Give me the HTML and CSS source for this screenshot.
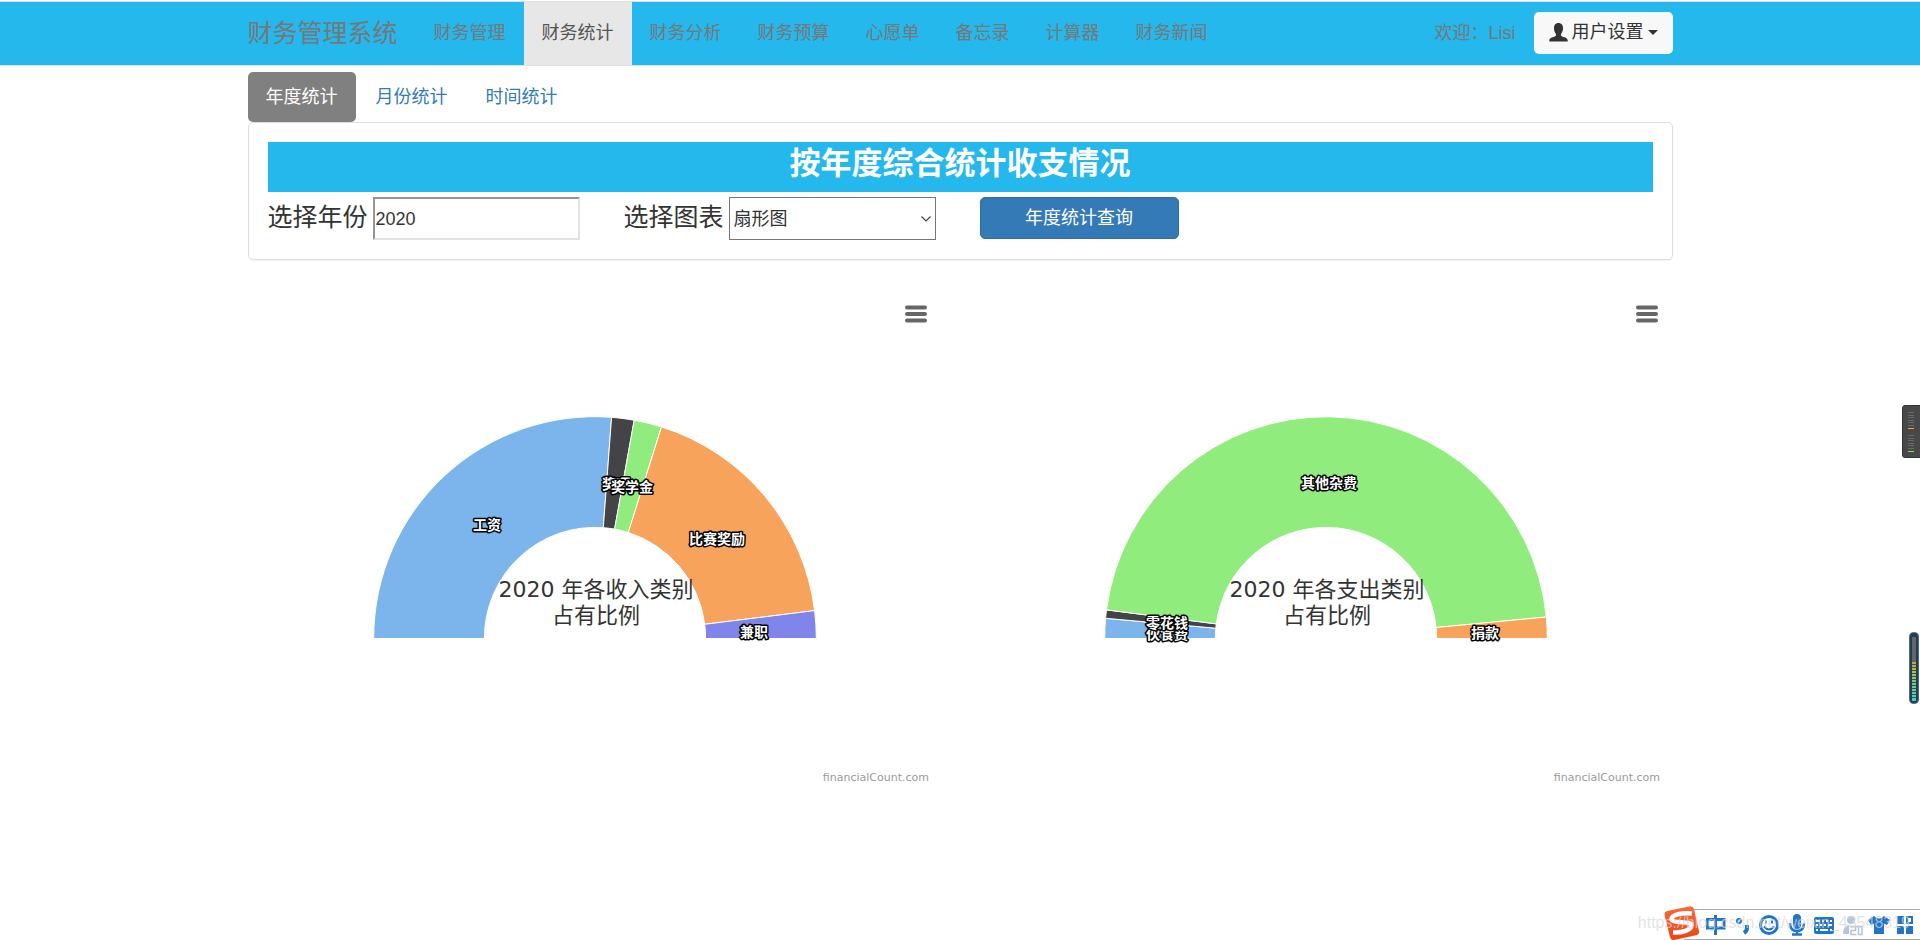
FILE: index.html
```html
<!DOCTYPE html>
<html lang="zh-CN">
<head>
<meta charset="utf-8">
<meta name="viewport" content="width=device-width, initial-scale=1">
<title>财务管理系统</title>
<link rel="stylesheet" href="styles.css">
</head>
<body>
<header class="navbar">
  <div class="container navbar-inner">
    <a class="brand" href="#">财务管理系统</a>
    <nav class="nav">
      <a href="#">财务管理</a>
      <a href="#" class="active">财务统计</a>
      <a href="#">财务分析</a>
      <a href="#">财务预算</a>
      <a href="#">心愿单</a>
      <a href="#">备忘录</a>
      <a href="#">计算器</a>
      <a href="#">财务新闻</a>
    </nav>
    <span class="welcome">欢迎：Lisi</span>
    <button type="button" class="user-btn">
      <svg width="19" height="19" viewBox="0 0 19 19" aria-hidden="true"><path d="M9.500 0C12.800 0 14 2.300 14 5.500C14 8.300 12.900 9.500 12 11V12.500C12.600 14.200 18.700 14.200 18.700 17.200V18.500H.3V17.200C.3 14.200 6.400 14.200 7 12.500V11C6.100 9.500 5 8.300 5 5.500C5 2.300 6.200 0 9.500 0Z" fill="#333"/></svg>
      用户设置
      <span class="caret"></span>
    </button>
  </div>
</header>

<main class="container">
  <nav class="pills">
    <a href="#" class="active">年度统计</a>
    <a href="#">月份统计</a>
    <a href="#">时间统计</a>
  </nav>

  <section class="panel">
    <h1 class="panel-title">按年度综合统计收支情况</h1>
    <form class="query">
      <div class="field">
        <label for="year">选择年份</label>
        <input id="year" type="text" value="2020">
      </div>
      <div class="field">
        <label for="chart-type">选择图表</label>
        <span class="select-wrap">
          <select id="chart-type"><option>扇形图</option></select>
          <svg class="chevron" width="10" height="6" viewBox="0 0 10 6" aria-hidden="true"><path d="M.5.500 5 5 9.500.500" fill="none" stroke="#444" stroke-width="1.200"/></svg>
        </span>
      </div>
      <button type="button" class="submit">年度统计查询</button>
    </form>
  </section>

  <section class="charts">
    <svg class="chart" viewBox="0 0 694 500" role="img" aria-label="2020 年各收入类别占有比例">
      <g class="slices">
        <path fill="#7cb5ec" d="M125.700 350.500V350A221.300 221.300 0 0 1 363.600 129.300L355.300 239.700A110.600 110.600 0 0 0 236.400 350V350.500Z"/>
        <path fill="#434348" d="M363.600 129.300A221.300 221.300 0 0 1 386.200 132.200L366.600 241.100A110.600 110.600 0 0 0 355.300 239.700Z"/>
        <path fill="#90ed7d" d="M386.200 132.200A221.300 221.300 0 0 1 413.500 138.900L380.300 244.500A110.600 110.600 0 0 0 366.600 241.100Z"/>
        <path fill="#f7a35c" d="M413.500 138.900A221.300 221.300 0 0 1 566.600 322.600L456.700 336.300A110.600 110.600 0 0 0 380.300 244.500Z"/>
        <path fill="#8085e9" d="M566.600 322.600A221.300 221.300 0 0 1 568.300 350V350.500H457.600V350A110.600 110.600 0 0 0 456.700 336.300Z"/>
      </g>
      <text class="chart-title" x="348" y="309">2020 年各收入类别</text>
      <text class="chart-title" x="348" y="335">占有比例</text>
      <g class="labels">
        <text x="239" y="242">工资</text>
        <text x="368" y="201">奖项</text>
        <text x="384" y="204">奖学金</text>
        <text x="469" y="256">比赛奖励</text>
        <text x="506" y="349">兼职</text>
      </g>
      <path class="menu" d="M659 19.500H677M659 26H677M659 32.500H677"/>
      <text class="credits" x="681" y="493">financialCount.com</text>
    </svg>
    <svg class="chart" viewBox="0 0 694 500" role="img" aria-label="2020 年各支出类别占有比例">
      <g class="slices">
        <path fill="#7cb5ec" d="M125.700 350.500V350A221.300 221.300 0 0 1 126.600 330.300L236.800 340.200A110.600 110.600 0 0 0 236.400 350V350.500Z"/>
        <path fill="#434348" d="M126.600 330.300A221.300 221.300 0 0 1 127.500 321.900L237.300 335.900A110.600 110.600 0 0 0 236.800 340.200Z"/>
        <path fill="#90ed7d" d="M127.500 321.900A221.300 221.300 0 0 1 567.300 329L457.100 339.500A110.600 110.600 0 0 0 237.300 335.900Z"/>
        <path fill="#f7a35c" d="M567.300 329A221.300 221.300 0 0 1 568.300 350V350.500H457.600V350A110.600 110.600 0 0 0 457.100 339.500Z"/>
      </g>
      <text class="chart-title" x="348" y="309">2020 年各支出类别</text>
      <text class="chart-title" x="348" y="335">占有比例</text>
      <g class="labels">
        <text x="188" y="351">伙食费</text>
        <text x="188" y="340">零花钱</text>
        <text x="350" y="200">其他杂费</text>
        <text x="506" y="350">捐款</text>
      </g>
      <path class="menu" d="M659 19.500H677M659 26H677M659 32.500H677"/>
      <text class="credits" x="681" y="493">financialCount.com</text>
    </svg>
  </section>
</main>

<svg class="meter meter-top" width="18" height="53" viewBox="0 0 18 53" aria-hidden="true">
  <path d="M18 .5H3Q.5.500.5 3V50Q.5 52.500 3 52.500H18" fill="#484848" stroke="#333"/>
  <path d="M6 7.500H12M6 10.500H12M6 12.500H12M6 15.500H12M6 17.500H12M6 20.500H12M6 30.500H12M6 33.500H12M6 35.500H12M6 38.500H12M6 40.500H12M6 43.500H12" stroke="#6a6a6a"/>
  <path d="M6 23.500H12" stroke="#ffa11a"/><path d="M6 46.500H12" stroke="#8be03c"/>
</svg>
<svg class="meter meter-bottom" width="10" height="72" viewBox="0 0 10 72" aria-hidden="true">
  <defs><linearGradient id="level" x1="0" y1="0" x2="0" y2="1"><stop offset="0" stop-color="#d69d35"/><stop offset=".25" stop-color="#b5bd42"/><stop offset=".6" stop-color="#79c87d"/><stop offset="1" stop-color="#45c9c0"/></linearGradient></defs>
  <rect x=".5" y=".5" width="9" height="71" rx="4" fill="#1f3e58" stroke="#51687c"/>
  <rect x="3" y="5" width="4" height="64" fill="#666"/>
  <rect x="3" y="30" width="4" height="39" fill="url(#level)"/>
  <path d="M3 32.500H7M3 35.500H7M3 38.500H7M3 41.500H7M3 44.500H7M3 47.500H7M3 50.500H7M3 53.500H7M3 56.500H7M3 59.500H7M3 62.500H7M3 65.500H7" stroke="#2b5560"/>
</svg>

<div class="ime" aria-hidden="true">
  <svg width="256" height="34" viewBox="0 0 256 34">
    <defs><linearGradient id="logo" x1="0" y1="0" x2="0" y2="1"><stop offset="0" stop-color="#fb6a3a"/><stop offset="1" stop-color="#ea4416"/></linearGradient></defs>
    <path d="M20 3.500H256V33H20Z" fill="#fff"/><path d="M20 3.500H256M20 33.500H256" stroke="#aaa"/>
    <path d="M3 5 26 .3Q29 0 30 3L35 25Q35.500 28 33 29L10 34Q7 34.500 6 31L.5 9Q0 6 3 5Z" fill="url(#logo)"/>
    <path d="M28 7.500C20 6.500 8 8 7.500 13C7.500 17.500 27 15 27.500 19C27.500 24.500 17 27 9 26.500" fill="none" stroke="#fff" stroke-width="4.500"/>
    <g fill="none" stroke="#2175c7" stroke-width="3">
      <path d="M43.500 13.500H60V22H43.500ZM51.500 9V29"/>
      <circle cx="75" cy="15" r="2" stroke-width="2"/><path d="M83 19V22Q83 25 80 27" stroke-width="4"/>
      <circle cx="105" cy="19" r="8.500"/><path d="M100 20.500Q105 26.500 110 20.500" stroke-width="2"/><path d="M102 14.500V17.500M108 14.500V17.500" stroke-width="2"/>
      <path d="M126 17Q126 25 133 25T140 17M133 25V28M128 28.500H138" stroke-width="2.500"/>
    </g>
    <rect x="129" y="8" width="8" height="15" rx="4" fill="#2175c7"/>
    <rect x="150" y="11" width="20" height="17" rx="2" fill="#2175c7"/>
    <path d="M152 15H156M158 15H160M162 15H164M166 15H168M152 19H154M156 19H158M160 19H162M164 19H168M152 24H154M156 24H164M166 24H168" stroke="#fff" stroke-width="2"/>
    <circle cx="187" cy="14" r="4" fill="#b5c4da"/><path d="M179 28Q179 19 187 19V28Z" fill="#b5c4da"/>
    <path d="M185 19H199V30H185Z" fill="#fff"/>
    <path d="M186 20.500H191.500V24.500H187V28.500H192.500M192 20.500H198V28.500H194.500V21" fill="none" stroke="#b5c4da" stroke-width="1.500"/>
    <path d="M210 10 204 14 207 19 210 17.500V28H220V17.500L223 19 226 14 220 10Q215 15 210 10Z" fill="#2175c7"/>
    <path d="M233 10H240V18H233ZM233 20H240V28H233ZM242 20H249V28H242Z" fill="#2175c7"/><path d="M243 11H248V17H243Z" fill="none" stroke="#2175c7" stroke-width="2"/>
  </svg>
</div>
<div class="watermark">https://blog.csdn.net/weixin_43548319</div>
</body>
</html>
```

FILE: styles.css
```css
* { box-sizing: border-box; }

body {
  margin: 0;
  min-height: 100vh;
  position: relative;
  padding-top: 1px;
  background: #fff;
  color: #333;
  font-family: "Liberation Sans", "Noto Sans CJK SC", sans-serif;
  font-size: 18px;
  line-height: 25px;
}

a { text-decoration: none; }

.container {
  max-width: 1425px;
  margin: 0 auto;
}

.navbar {
  background: #24b8ed;
  border-top: 1px solid #e0e0e0;
  border-bottom: 1px solid #e0e0e0;
}

.navbar-inner {
  display: flex;
  align-items: center;
  height: 63px;
}

.brand {
  margin-right: 18px;
  color: #777;
  font-size: 25px;
}

.nav {
  display: flex;
  height: 100%;
}

.nav a {
  padding: 19px 18px;
  color: #777;
}

.nav a.active {
  background: #e7e7e7;
  color: #555;
}

.welcome {
  margin-left: auto;
  margin-right: 18px;
  color: #777;
}

.user-btn {
  display: flex;
  align-items: center;
  gap: 4px;
  height: 42px;
  margin-bottom: 2px;
  padding: 0 15px;
  border: 0;
  border-radius: 5px;
  background: #f8f8f8;
  color: #333;
  font: inherit;
}

.caret {
  border: 5px solid transparent;
  border-top-color: #333;
  border-bottom: 0;
}

.pills {
  display: flex;
  gap: 2px;
  margin-top: 6px;
}

.pills a {
  padding: 13px 18px 12px;
  border-radius: 5px;
  color: #337ab7;
}

.pills a.active {
  background: #808080;
  color: #fff;
}

.panel {
  padding: 19px;
  border: 1px solid #ddd;
  border-radius: 5px;
  box-shadow: 0 1px 1px rgba(0, 0, 0, .05);
}

.panel-title {
  margin: 0 0 5px;
  padding-bottom: 6px;
  background: #24b8ed;
  color: #fff;
  font-size: 31px;
  line-height: 44px;
  text-align: center;
}

.query {
  display: flex;
  gap: 44px;
}

.field {
  display: flex;
  gap: 5px;
}

.field label {
  font-size: 25px;
  line-height: 40px;
}

.field input,
.field select {
  width: 207px;
  height: 43px;
  background: #fff;
  color: #333;
  font: inherit;
}

.field input {
  padding: 2px 1px 0;
  border: 2px solid;
  border-color: #949494 #e3e3e3 #e3e3e3 #949494;
}

.field select {
  padding: 2px 4px 0;
  border: 1px solid #767676;
  border-radius: 0;
  appearance: none;
}

.select-wrap { position: relative; }

.chevron {
  position: absolute;
  right: 5px;
  top: 19px;
}

.submit {
  width: 199px;
  height: 42px;
  border: 1px solid #2e6da4;
  border-radius: 5px;
  background: #337ab7;
  color: #fff;
  font: inherit;
}

.charts {
  display: flex;
  gap: 37px;
  margin-top: 28px;
}

.chart {
  flex: 1;
  min-width: 0;
  height: 500px;
  font-family: "DejaVu Sans", "Noto Sans CJK SC", sans-serif;
}

.slices path { stroke: #fff; stroke-width: 1px; }

.chart-title {
  fill: #333;
  font-size: 22px;
  text-anchor: middle;
}

.labels text {
  fill: #fff;
  stroke: #000;
  stroke-width: 3px;
  stroke-linejoin: round;
  paint-order: stroke;
  font-size: 14px;
  font-weight: 700;
  text-anchor: middle;
}

.menu {
  fill: none;
  stroke: #666;
  stroke-width: 4px;
  stroke-linecap: round;
}

.credits {
  fill: #999;
  font-size: 11px;
  text-anchor: end;
}

.meter { position: absolute; }
.meter-top { right: 0; top: 405px; }
.meter-bottom { right: 1px; top: 632px; }

.ime {
  position: absolute;
  right: 0;
  bottom: 0;
}

.ime svg { display: block; }

.watermark {
  position: absolute;
  right: 10px;
  bottom: 5px;
  color: rgba(215, 215, 215, .7);
  font-size: 16px;
}
```
